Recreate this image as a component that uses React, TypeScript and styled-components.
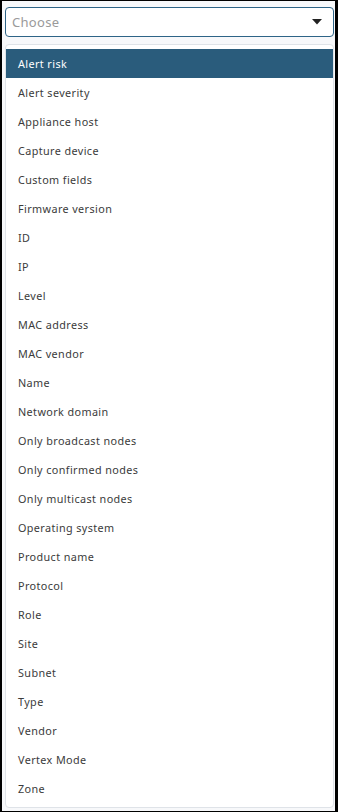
import React from "react";
import styled, { createGlobalStyle } from "styled-components";

const Global = createGlobalStyle`
  html, body { margin: 0; padding: 0; }
  body {
    width: 338px;
    height: 812px;
    background: #000;
    font-family: "Noto Sans", "DejaVu Sans", sans-serif;
    overflow: hidden;
  }
`;

const Frame = styled.div`
  box-sizing: border-box;
  margin: 1px 3px 1px 2px;
  height: 810px;
  background: #f7f8fa;
  padding: 6px 1px 0 3px;
  display: flex;
  flex-direction: column;
  gap: 7px;
`;

const SelectBox = styled.div`
  box-sizing: border-box;
  height: 30px;
  border: 1px solid #2e6487;
  border-radius: 4px;
  background: #fff;
  display: flex;
  align-items: center;
  justify-content: space-between;
  padding: 0 11px 0 6px;
`;

const Placeholder = styled.span`
  font-size: 13px;
  letter-spacing: 0.3px;
  color: #9a9a9a;
`;

const Menu = styled.ul`
  box-sizing: border-box;
  list-style: none;
  margin: 0;
  padding: 4px 0 4px 0;
  border: 1px solid #dfe3e8;
  border-radius: 4px;
  background: #fff;
`;

const Item = styled.li<{ $active?: boolean }>`
  height: 29px;
  display: flex;
  align-items: center;
  padding-left: 12px;
  font-size: 10.8px;
  letter-spacing: 0.4px;
  color: ${(p) => (p.$active ? "#ffffff" : "#3b3b3b")};
  background: ${(p) => (p.$active ? "#2a5c7c" : "transparent")};
`;

const items = [
  "Alert risk",
  "Alert severity",
  "Appliance host",
  "Capture device",
  "Custom fields",
  "Firmware version",
  "ID",
  "IP",
  "Level",
  "MAC address",
  "MAC vendor",
  "Name",
  "Network domain",
  "Only broadcast nodes",
  "Only confirmed nodes",
  "Only multicast nodes",
  "Operating system",
  "Product name",
  "Protocol",
  "Role",
  "Site",
  "Subnet",
  "Type",
  "Vendor",
  "Vertex Mode",
  "Zone",
];

export default function App() {
  return (
    <>
      <Global />
      <Frame>
        <SelectBox>
          <Placeholder>Choose</Placeholder>
          <svg width="10" height="6" viewBox="0 0 10 6">
            <path d="M0 0 H10 L5 5.5 Z" fill="#222" />
          </svg>
        </SelectBox>
        <Menu>
          {items.map((t, i) => (
            <Item key={t} $active={i === 0}>
              {t}
            </Item>
          ))}
        </Menu>
      </Frame>
    </>
  );
}
